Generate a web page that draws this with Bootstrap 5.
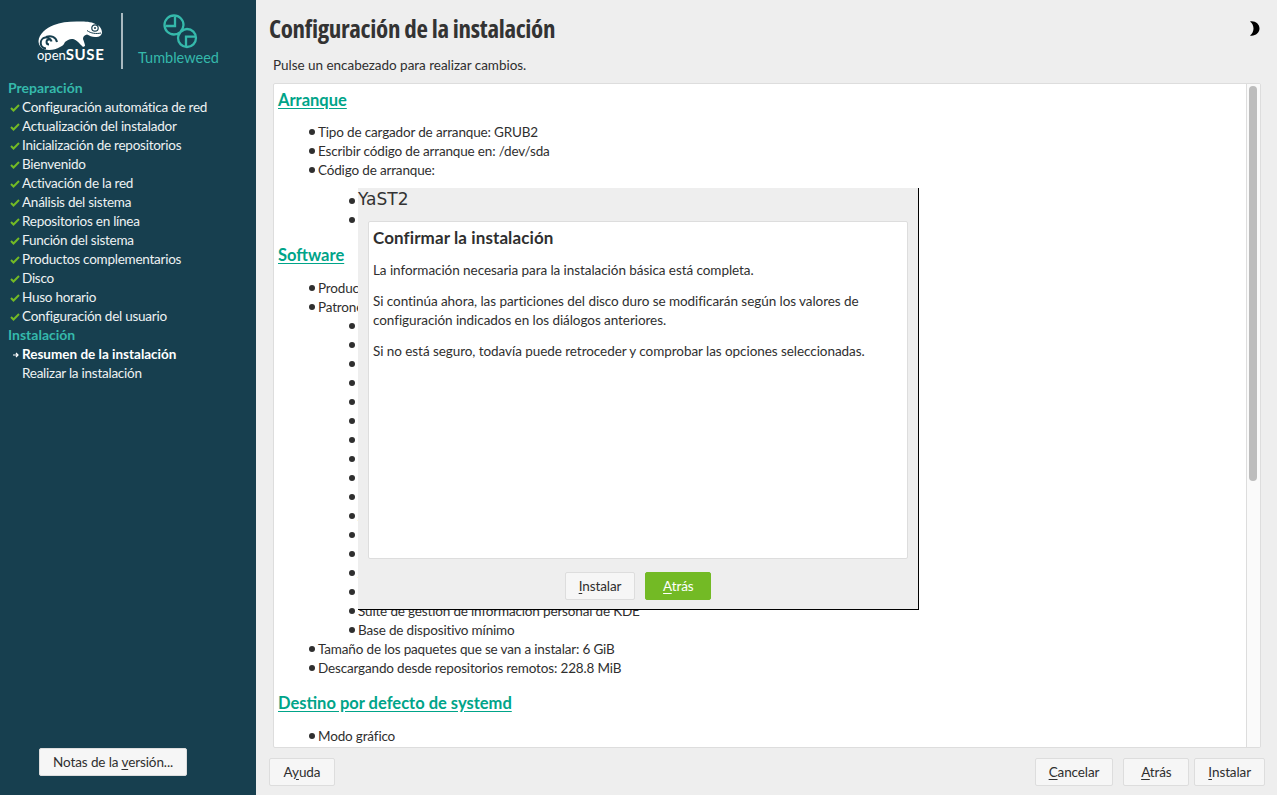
<!DOCTYPE html>
<html lang="es">
<head>
  <meta charset="UTF-8">
  <title>Configuración de la instalación</title>
  <link href="https://cdn.jsdelivr.net/npm/bootstrap@5.3.0/dist/css/bootstrap.min.css" rel="stylesheet">
  <style>
    html, body { height: 100%; margin: 0; }
    body {
      overflow: hidden;
      background: #eeeeee;
      color: #2f2f2f;
      font-family: Lato, "Noto Sans", sans-serif;
      font-size: 13.5px;
      letter-spacing: -0.25px;
      line-height: 19px;
    }
    .shell { height: 795px; position: relative; }
    .side { width: 256px; background: #173f4f; color: #eef2f3; }
    .logo-row { height: 79px; padding-left: 37px; padding-top: 13px; letter-spacing: 0; }
    .logo-left { width: 67px; padding-top: 7px; }
    .logo-sep { width: 2px; height: 56px; background: #a9b9c0; margin: 0 15px 0 17px; }
    .logo-right { width: 81px; padding-top: 1px; }
    .logo-left svg, .logo-right svg { display: block; }
    .logo-right svg { margin-left: 25px; }
    .logo-name { color: #fff; font-size: 13px; line-height: 12px; margin-top: -3px; text-align: center; white-space: nowrap; }
    .logo-name b { font-size: 15px; letter-spacing: 0.6px; }
    .tw-name { color: #35b9ab; font-size: 14.5px; line-height: 16px; margin-top: 1px; }
    .step-head { color: #35b9ab; font-weight: 700; padding: 0 0 2px 8px; font-size: 14px; letter-spacing: 0; line-height: 17px; }
    .step { padding-left: 22px; position: relative; }
    .step svg { position: absolute; left: 10px; top: 6px; }
    .step.cur { color: #fff; font-weight: 700; letter-spacing: 0; }
    .notes-wrap { padding: 0 0 19px 39px; }
    .yast-btn {
      background: #f6f6f6;
      border: 1px solid #dddddd;
      border-radius: 2px;
      color: #2f2f2f;
      font-size: 13.5px;
      letter-spacing: -0.1px;
      line-height: 19px;
      padding: 3px 13px;
      height: 28px;
      min-width: 66px;
    }
    .yast-btn.ok { background: #73ba25; border-color: #73ba25; color: #fff; }
    .yast-btn u { text-underline-offset: 2px; }
    .page-title {
      font-family: "Open Sans", sans-serif;
      font-stretch: 75%;
      font-size: 25px;
      font-weight: 700;
      letter-spacing: -0.33px;
      line-height: 32px;
      color: #333;
      margin: 0;
    }
    .top-bar { padding: 12px 16px 0 13px; height: 46px; }
    .hint { padding: 10px 0 0 17px; height: 37px; margin: 0; letter-spacing: -0.03px; }
    .sheet {
      height: 665px;
      margin: 0 16px 0 17px;
      background: #fff;
      border: 1px solid #dddddd;
      border-radius: 2px;
      overflow: hidden;
    }
    .sheet-body { padding: 5px 0 0 4px; overflow: hidden; letter-spacing: -0.16px; }
    .sec-title {
      display: block;
      color: #00a489;
      font-size: 16.5px;
      font-weight: 700;
      letter-spacing: 0;
      line-height: 22px;
      text-decoration: underline;
      text-underline-offset: 2px;
      margin: 0;
    }
    .dots { list-style: none; margin: 0; padding: 0; }
    .dots li::before {
      content: "";
      display: inline-block;
      width: 6px;
      height: 6px;
      border-radius: 50%;
      background: #2f2f2f;
      margin-right: 3px;
      vertical-align: 2px;
    }
    .dots.lv1 { padding-left: 31px; margin-top: 13px; margin-bottom: 14px; }
    .sec-title:first-child + .dots { margin-top: 12px; }
    .dots.lv2 { padding-left: 40px; }
    .dots.lv2.spaced { margin-top: 12px; }
    .track { width: 14px; background: #fafafa; border-left: 1px solid #dddddd; padding: 2px 3px 0 2px; }
    .thumb { height: 395px; background: #bdbdbd; border-radius: 4px; }
    .foot { height: 47px; padding: 10px 12px 0 13px; }
    .foot-group { gap: 5px; }
    .foot-wide { margin-right: 5px; }
    .dlg {
      position: absolute;
      left: 358px;
      top: 188px;
      width: 561px;
      height: 422px;
      background: #eeeeee;
      border-right: 1px solid #000;
      border-bottom: 1px solid #000;
    }
    .dlg-title { font-family: "DejaVu Sans", sans-serif; font-size: 17px; letter-spacing: 0; line-height: 20px; color: #333; height: 33px; padding-top: 1px; }
    .dlg-box {
      margin: 0 10px 0 10px;
      height: 338px;
      background: #fff;
      border: 1px solid #dddddd;
      border-radius: 2px;
      padding: 5px 4px;
      letter-spacing: -0.06px;
    }
    .dlg-box h2 { font-size: 17px; font-weight: 700; letter-spacing: 0.1px; line-height: 22px; margin: 0 0 12px; font-family: inherit; }
    .dlg-box p { margin: 0 0 12px; }
    .dlg-foot { gap: 10px; padding-top: 13px; }
    .moon { margin-top: 9px; }
  </style>
</head>
<body>
  <div class="shell d-flex">
    <div class="side d-flex flex-column flex-shrink-0">
      <div class="logo-row d-flex">
        <div class="logo-left">
          <svg width="67" height="31" viewBox="0 0 67 31">
            <path fill="#fff" d="M12 30C5 30 1.500 26 1.500 21C2 14 9 8 17 5C24 2 34 1 45 1.500C50 1.500 56 2 60 5C63 6 65 9 65 13C64 16 62 17.500 58 17C55 17 52 15.500 50 14.500C47 15 46 17 46 19C47 22 48 24 48 26L46 27C43 24 40 20 36 19C33 18.500 30 20 28 22C27 24 26 26 23 27C20 29 16 30 12 30Z"/>
            <path fill="none" stroke="#173f4f" stroke-width="2" d="M12 24.500a2.500 2.500 0 1 1 2.500-3a5.500 5.500 0 1 0-5.500 7"/>
            <path fill="none" stroke="#173f4f" stroke-width="2" d="M9 17c5-2 10 0 11 5"/>
            <circle cx="58" cy="8" r="3.200" fill="none" stroke="#173f4f" stroke-width="1.200"/>
            <circle cx="58" cy="8" r="1" fill="#173f4f"/>
            <path fill="none" stroke="#173f4f" stroke-width="1" d="M50 10.500c4 3 9 3.500 14 2.500"/>
          </svg>
          <div class="logo-name">open<b>SUSE</b></div>
        </div>
        <div class="logo-sep"></div>
        <div class="logo-right">
          <svg width="35" height="35" viewBox="0 0 35 35" fill="none" stroke="#35b9ab" stroke-width="2.300">
            <path d="M1.500 11A9.500 9.500 0 0 1 20.500 11C20.500 16 15 19 15 24A9 9 0 0 0 33 24A9 9 0 0 0 24 15C19 15 17 20.500 11 20.500A9.500 9.500 0 0 1 1.500 11Z"/>
            <path d="M2.700 12H12V2.700M23 32V22.700H33"/>
          </svg>
          <div class="tw-name">Tumbleweed</div>
        </div>
      </div>
      <div class="step-head">Preparación</div>
      <div id="steps-a"></div>
      <div class="step-head">Instalación</div>
      <div class="step cur"><svg width="9" height="8" viewBox="0 0 9 8" fill="none" stroke="#fff" stroke-width="1.2"><path d="M3 4h5M6 2l2 2-2 2"/></svg>Resumen de la instalación</div>
      <div class="step">Realizar la instalación</div>
      <div class="notes-wrap mt-auto">
        <button class="yast-btn" type="button">Notas de la <u>v</u>ersión...</button>
      </div>
    </div>

    <div class="flex-grow-1 d-flex flex-column">
      <div class="top-bar d-flex justify-content-between">
        <h1 class="page-title">Configuración de la instalación</h1>
        <svg class="moon" width="12" height="15" viewBox="0 0 12 15"><path fill="#000" d="M1 0.500C6-0.500 10.500 3 10.500 7.500C10.500 12 6 15.500 1 14.500C3.500 12.500 4.500 10 4.500 7.500C4.500 5 3.500 2.500 1 0.500Z"/></svg>
      </div>
      <p class="hint">Pulse un encabezado para realizar cambios.</p>
      <div class="sheet d-flex">
        <div class="sheet-body flex-grow-1">
          <a class="sec-title" href="#">Arranque</a>
          <ul class="dots lv1">
            <li>Tipo de cargador de arranque: GRUB2</li>
            <li>Escribir código de arranque en: /dev/sda</li>
            <li>Código de arranque:
              <ul class="dots lv2 spaced">
                <li>Registro de arranque</li>
                <li>Partición de arranque</li>
              </ul>
            </li>
          </ul>
          <a class="sec-title" href="#">Software</a>
          <ul class="dots lv1">
            <li>Producto: openSUSE Tumbleweed</li>
            <li>Patrones:
              <ul class="dots lv2" id="patterns"></ul>
            </li>
            <li>Tamaño de los paquetes que se van a instalar: 6 GiB</li>
            <li>Descargando desde repositorios remotos: 228.8 MiB</li>
          </ul>
          <a class="sec-title" href="#">Destino por defecto de systemd</a>
          <ul class="dots lv1">
            <li>Modo gráfico</li>
          </ul>
        </div>
        <div class="track flex-shrink-0"><div class="thumb"></div></div>
      </div>
      <div class="foot d-flex justify-content-between">
        <button class="yast-btn" type="button">A<u>y</u>uda</button>
        <div class="d-flex foot-group">
          <button class="yast-btn foot-wide" type="button"><u>C</u>ancelar</button>
          <button class="yast-btn" type="button"><u>A</u>trás</button>
          <button class="yast-btn" type="button"><u>I</u>nstalar</button>
        </div>
      </div>
    </div>

    <div class="dlg">
      <div class="dlg-title">YaST2</div>
      <div class="dlg-box">
        <h2>Confirmar la instalación</h2>
        <p>La información necesaria para la instalación básica está completa.</p>
        <p>Si continúa ahora, las particiones del disco duro se modificarán según los valores de<br>configuración indicados en los diálogos anteriores.</p>
        <p>Si no está seguro, todavía puede retroceder y comprobar las opciones seleccionadas.</p>
      </div>
      <div class="dlg-foot d-flex justify-content-center">
        <button class="yast-btn" type="button"><u>I</u>nstalar</button>
        <button class="yast-btn ok" type="button"><u>A</u>trás</button>
      </div>
    </div>
  </div>

  <script>
    const done = ['Configuración automática de red', 'Actualización del instalador', 'Inicialización de repositorios',
      'Bienvenido', 'Activación de la red', 'Análisis del sistema', 'Repositorios en línea', 'Función del sistema',
      'Productos complementarios', 'Disco', 'Huso horario', 'Configuración del usuario'];
    document.getElementById('steps-a').innerHTML = done.map(s =>
      `<div class="step"><svg width="10" height="8" viewBox="0 0 10 8" fill="none" stroke="#73ba25" stroke-width="2"><path d="M1 4l2.500 2.500L9 1"/></svg>${s}</div>`).join('');
    const patterns = ['Sistema base', 'Sistema base mejorado', 'Herramientas de YaST', 'Software', 'Fuentes', 'Multimedia',
      'Oficina', 'Redes', 'Navegador', 'Impresión', 'Juegos', 'Gráficos', 'Escritorio KDE', 'Aplicaciones KDE', 'Utilidades',
      'Suite de gestión de información personal de KDE', 'Base de dispositivo mínimo'];
    document.getElementById('patterns').innerHTML = patterns.map(p => `<li>${p}</li>`).join('');
  </script>
</body>
</html>
